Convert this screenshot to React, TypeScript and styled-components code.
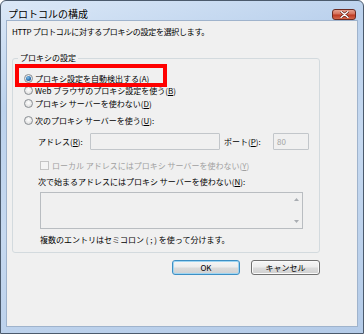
import React from 'react';
import styled, { createGlobalStyle } from 'styled-components';

const Global = createGlobalStyle`
  html, body { margin: 0; padding: 0; background: #ffffff; }
  body { font-family: "Noto Sans CJK JP", "Noto Sans", sans-serif; color: #000; }
  * { box-sizing: border-box; }
`;

const Window = styled.div`
  width: 364px;
  height: 334px;
  display: flex;
  flex-direction: column;
  border: 1px solid #4b5a6c;
  border-radius: 6px 6px 0 0;
  background: linear-gradient(165deg, #dbe8f7 0%, #bcd2ed 25%, #c6d9f0 55%, #b4cbe8 100%);
  overflow: hidden;
`;

const TitleBar = styled.div`
  height: 19px;
  flex: none;
  display: flex;
  align-items: flex-end;
  justify-content: space-between;
  padding: 0 7px 0 7px;
`;

const Title = styled.div`
  font-size: 10px;
  line-height: 12px;
  color: #000;
  text-shadow: 0 0 4px rgba(255, 255, 255, 0.9);
`;

const CloseButton = styled.div`
  width: 24px;
  height: 11px;
  border: 1px solid #6b2b22;
  border-radius: 3px;
  background: linear-gradient(#e6a08e 0%, #d6705a 45%, #bd3a22 55%, #d4674c 100%);
  display: flex;
  align-items: center;
  justify-content: center;
`;

const Client = styled.div`
  flex: 1;
  margin: 0 5px 6px 5px;
  background: #f0f0f0;
  border: 1px solid #9fb3cc;
  padding: 0 0 0 5px;
  display: flex;
  flex-direction: column;
  font-size: 8px;
`;

const Column = styled.div`
  width: 308px;
  display: flex;
  flex-direction: column;
`;

const Description = styled.div`
  margin-top: 5px;
  height: 12px;
  line-height: 12px;
  white-space: nowrap;
  letter-spacing: -0.3px;
`;

const Group = styled.fieldset`
  margin: 15px 0 0 0;
  padding: 9px 0 6px 0;
  border: 1px solid #d3dade;
  border-radius: 3px;
  min-width: 0;
`;

const Legend = styled.legend`
  margin-left: 5px;
  padding: 0 2px;
  line-height: 10px;
  height: 10px;
  font-size: 8px;
`;

const RadioRow = styled.div<{ $extraTop?: number; $h?: number }>`
  position: relative;
  height: ${(p) => p.$h ?? 13}px;
  display: flex;
  align-items: center;
  gap: 2px;
  padding-left: 11px;
  margin-top: ${(p) => p.$extraTop ?? 0}px;
  white-space: nowrap;
`;

const Radio = styled.span<{ $checked?: boolean }>`
  width: 9px;
  height: 9px;
  border-radius: 50%;
  border: 1px solid #8a8f94;
  background: radial-gradient(circle at 50% 40%, #ffffff 0%, #e6e6e6 60%, #d0d0d0 100%);
  display: flex;
  align-items: center;
  justify-content: center;
  flex: none;
  &::after {
    content: '';
    display: ${(p) => (p.$checked ? 'block' : 'none')};
    width: 5px;
    height: 5px;
    border-radius: 50%;
    background: radial-gradient(circle at 40% 35%, #7fc0ea 0%, #2c6fb0 55%, #1a4a80 100%);
  }
`;

const Highlight = styled.div`
  position: absolute;
  left: 2px;
  top: -8px;
  width: 152px;
  height: 23px;
  border: 4px solid #ff0000;
  pointer-events: none;
  z-index: 1;
`;

const Sub = styled.div`
  padding-left: 25px;
  display: flex;
  flex-direction: column;
`;

const AddressRow = styled.div`
  margin-top: 6px;
  height: 17px;
  display: flex;
  align-items: center;
`;

const FieldLabel = styled.span<{ $w: number }>`
  width: ${(p) => p.$w}px;
  flex: none;
  white-space: nowrap;
`;

const TextBox = styled.div<{ $w: number }>`
  width: ${(p) => p.$w}px;
  height: 17px;
  flex: none;
  border: 1px solid #c2c6ca;
  border-radius: 1px;
  background: #f0f0f0;
  color: #a3a3a3;
  padding-left: 3px;
  line-height: 15px;
  margin-right: 4px;
`;

const CheckRow = styled.div`
  margin-top: 9px;
  height: 12px;
  padding-left: 2px;
  display: flex;
  align-items: center;
  gap: 3px;
  color: #a0a0a0;
  white-space: nowrap;
`;

const CheckBox = styled.span`
  width: 9px;
  height: 9px;
  flex: none;
  border: 1px solid #c4c4c4;
  background: #f4f4f4;
`;

const Line = styled.div<{ $top: number; $indent?: number }>`
  margin-top: ${(p) => p.$top}px;
  padding-left: ${(p) => p.$indent ?? 0}px;
  height: 12px;
  line-height: 12px;
  white-space: nowrap;
`;

const ListBox = styled.div`
  margin: 4px 0 0 2px;
  width: 263px;
  height: 37px;
  border: 1px solid #b9bdc1;
  background: #f0f0f0;
  display: flex;
  justify-content: flex-end;
`;

const ScrollBar = styled.div`
  width: 12px;
  display: flex;
  flex-direction: column;
  justify-content: space-between;
  align-items: center;
  padding: 5px 0 5px 0;
`;

const Buttons = styled.div`
  margin-top: 7px;
  display: flex;
  justify-content: flex-end;
  gap: 11px;
`;

const Button = styled.div<{ $default?: boolean; $w: number }>`
  width: ${(p) => p.$w}px;
  height: 15px;
  border: 1px solid ${(p) => (p.$default ? '#3d8fc4' : '#707070')};
  border-radius: 3px;
  background: linear-gradient(#f6f6f6 0%, #ececec 48%, #dcdcdc 52%, #d0d0d0 100%);
  box-shadow: ${(p) => (p.$default ? 'inset 0 0 0 1px #9fd5f2' : 'inset 0 0 0 1px #fafafa')};
  display: flex;
  align-items: center;
  justify-content: center;
  font-size: 8px;
  line-height: 13px;
`;

const Arrow = ({ up }: { up?: boolean }) => (
  <svg width="5" height="3" viewBox="0 0 5 3">
    <polygon points={up ? '2.5,0 5,3 0,3' : '0,0 5,0 2.5,3'} fill="#a9adb2" />
  </svg>
);

export default function App() {
  return (
    <>
      <Global />
      <Window>
        <TitleBar>
          <Title>プロトコルの構成</Title>
          <CloseButton>
            <svg width="9" height="7" viewBox="0 0 9 7">
              <path d="M1 0.5 L8 6.5 M8 0.5 L1 6.5" stroke="#5a1a12" strokeWidth="2.6" strokeLinecap="round" />
              <path d="M1 0.5 L8 6.5 M8 0.5 L1 6.5" stroke="#ffffff" strokeWidth="1.4" strokeLinecap="round" />
            </svg>
          </CloseButton>
        </TitleBar>
        <Client>
          <Column>
            <Description>HTTP プロトコルに対するプロキシの設定を選択します。</Description>
            <Group>
              <Legend>プロキシの設定</Legend>
              <RadioRow $h={12}>
                <Radio $checked />
                <span>プロキシ設定を自動検出する(<u>A</u>)</span>
                <Highlight />
              </RadioRow>
              <RadioRow>
                <Radio />
                <span>Web ブラウザのプロキシ設定を使う(<u>B</u>)</span>
              </RadioRow>
              <RadioRow>
                <Radio />
                <span>プロキシ サーバーを使わない(<u>D</u>)</span>
              </RadioRow>
              <RadioRow $extraTop={4}>
                <Radio />
                <span>次のプロキシ サーバーを使う(<u>U</u>):</span>
              </RadioRow>
              <Sub>
                <AddressRow>
                  <FieldLabel $w={52}>アドレス(<u>R</u>):</FieldLabel>
                  <TextBox $w={130} />
                  <FieldLabel $w={49}>ポート(<u>P</u>):</FieldLabel>
                  <TextBox $w={36}>80</TextBox>
                </AddressRow>
                <CheckRow>
                  <CheckBox />
                  <span>ローカル アドレスにはプロキシ サーバーを使わない(<u>Y</u>)</span>
                </CheckRow>
                <Line $top={5}>次で始まるアドレスにはプロキシ サーバーを使わない(<u>N</u>):</Line>
                <ListBox>
                  <ScrollBar>
                    <Arrow up />
                    <Arrow />
                  </ScrollBar>
                </ListBox>
                <Line $top={5} $indent={2}>複数のエントリはセミコロン ( ; ) を使って分けます。</Line>
              </Sub>
            </Group>
            <Buttons>
              <Button $default $w={68}>OK</Button>
              <Button $w={69}>キャンセル</Button>
            </Buttons>
          </Column>
        </Client>
      </Window>
    </>
  );
}
